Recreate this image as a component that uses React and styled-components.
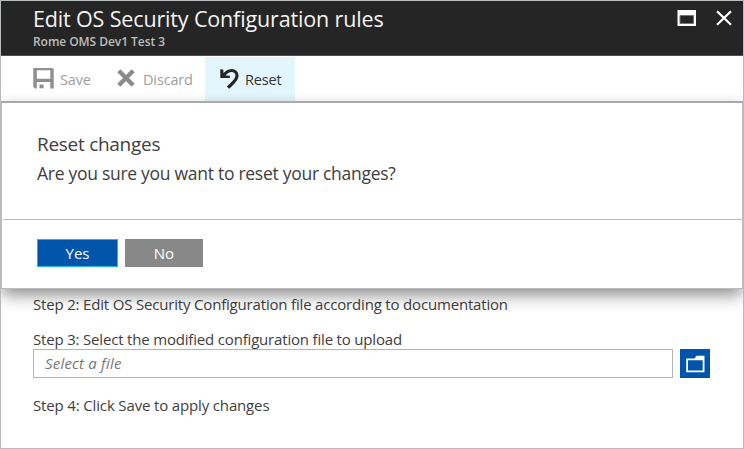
import React from "react";
import styled, { createGlobalStyle } from "styled-components";

const GlobalStyle = createGlobalStyle`
  * { box-sizing: border-box; }
  body { margin: 0; background: #fff; }
  button, input { font-family: inherit; }
`;

const Blade = styled.div`
  position: relative;
  display: flex;
  flex-direction: column;
  width: 744px;
  height: 449px;
  border: 1px solid #b9bcbc;
  background: #fff;
  color: #404040;
  font-family: "Open Sans", "Noto Sans", sans-serif;
  overflow: hidden;
`;

const Header = styled.header`
  display: flex;
  justify-content: space-between;
  height: 55px;
  padding: 4px 11px 0 32px;
  background: #252525;
  border-bottom: 1px solid #505050;
  flex: none;
`;

const Title = styled.h1`
  margin: 0;
  font-size: 21.5px;
  line-height: 28px;
  font-weight: 400;
  letter-spacing: -0.15px;
  color: #f4f4f4;
  white-space: nowrap;
`;

const Subtitle = styled.div`
  font-size: 12px;
  line-height: 18px;
  font-weight: 600;
  letter-spacing: -0.05px;
  color: #bdbdbd;
  white-space: nowrap;
`;

const WindowControls = styled.div`
  display: flex;
  align-items: flex-start;
  gap: 20px;
  padding-top: 5px;
  svg { display: block; }
`;

const Toolbar = styled.nav`
  display: flex;
  height: 45px;
  padding: 1px 0 0 20px;
  flex: none;
`;

const ToolButton = styled.button`
  display: flex;
  align-items: center;
  width: ${(p) => p.$width}px;
  padding: 0 0 0 ${(p) => p.$inset}px;
  gap: ${(p) => p.$gap}px;
  border: 0;
  background: ${(p) => (p.$active ? "#e3f6fd" : "transparent")};
  color: ${(p) => (p.$active ? "#333" : "#a0a0a0")};
  font-size: 14.5px;
  line-height: 20px;
  letter-spacing: -0.15px;
  white-space: nowrap;
  svg { display: block; flex: none; position: relative; top: -1px; }
`;

const ToolLabel = styled.span`
  padding-top: 1px;
`;

const Steps = styled.main`
  display: flex;
  flex-direction: column;
  padding: 193px 33px 0 32px;
`;

const Step = styled.div`
  height: ${(p) => p.$height}px;
  font-size: 15px;
  line-height: 20px;
  letter-spacing: ${(p) => p.$tracking}px;
  white-space: nowrap;
`;

const FileRow = styled.div`
  display: flex;
  gap: 7px;
  margin-bottom: 17px;
`;

const FileInput = styled.input`
  width: 640px;
  height: 29px;
  padding: 0 11px 1px;
  border: 1px solid #b4b4b4;
  background: #fff;
  font-size: 15px;
  font-style: italic;
  letter-spacing: 0.2px;
  &::placeholder { color: #777; opacity: 1; }
`;

const BrowseButton = styled.button`
  display: grid;
  place-items: center;
  width: 30px;
  height: 29px;
  padding: 0;
  border: 0;
  background: #0055ab;
`;

const Dialog = styled.section`
  position: absolute;
  top: 100px;
  left: 0;
  width: 742px;
  height: 188px;
  display: flex;
  flex-direction: column;
  background: #fff;
  border: 1px solid #bcbcbc;
  border-top: 2px solid #aaa;
  box-shadow: 0 7px 15px -1px rgba(0, 0, 0, 0.45);
`;

const DialogBody = styled.div`
  height: 116px;
  padding: 27px 0 0 35px;
`;

const DialogTitle = styled.h2`
  margin: 0;
  font-size: 19px;
  line-height: 28px;
  font-weight: 400;
  letter-spacing: -0.28px;
  white-space: nowrap;
`;

const Question = styled.p`
  margin: 0;
  font-size: 17.5px;
  line-height: 30px;
  letter-spacing: -0.28px;
  white-space: nowrap;
`;

const DialogActions = styled.div`
  display: flex;
  gap: 7px;
  margin-left: 1px;
  padding: 19px 0 0 34px;
  border-top: 1px solid #bbb;
`;

const ActionButton = styled.button`
  width: ${(p) => (p.$primary ? 81 : 78)}px;
  height: 28px;
  padding: 0;
  border: 1px solid ${(p) => (p.$primary ? "#1cb4ec" : "#888")};
  background: ${(p) => (p.$primary ? "#0055ab" : "#888")};
  color: #fff;
  font-size: 15px;
  line-height: 26px;
`;

const MaximizeIcon = () => (
  <svg width="19" height="16" viewBox="0 0 19 16">
    <path fill="#fff" fillRule="evenodd" d="M0.5 0H19V16H0.5ZM3 5.3V13.6H16.5V5.3Z" />
    <path fill="none" stroke="#777" d="M3 5.5H16.5V13.5H3Z" />
  </svg>
);

const CloseIcon = () => (
  <svg width="16" height="16" viewBox="0 0 16 16">
    <path d="M1 1.2L15 14.8M15 1.2L1 14.8" stroke="#fff" strokeWidth="2.2" />
  </svg>
);

const SaveIcon = () => (
  <svg width="21" height="21" viewBox="0 0 21 21">
    <path fill="#8f8f8f" fillRule="evenodd" d="M0.8 0H19.5L20.7 1.2V20.5H17.3V14H3.8V20.5H2L0.3 18.8V0.6ZM3.8 2.2V10.8H17.3V2.2Z" />
    <path fill="#8f8f8f" d="M6.5 16.5H10.5V20.3H6.5Z" />
  </svg>
);

const DiscardIcon = () => (
  <svg width="18" height="18" viewBox="0 0 18 18">
    <path d="M1.8 1.8L16.2 16.2M16.2 1.8L1.8 16.2" stroke="#8b8b8b" strokeWidth="4.4" />
  </svg>
);

const ResetIcon = () => (
  <svg width="19" height="21" viewBox="0 0 19 21" fill="none" stroke="#252525">
    <path d="M3 8C6 4 8.5 2.5 11.5 2.5C15 2.5 17 4.8 17 7.8C17 12.2 12.5 15.2 8 19.7" strokeWidth="3.2" />
    <path fill="#252525" stroke="none" d="M0.3 1L3.3 1.8L3.5 5.5L6 7.5L9.8 7.8V10H0.3Z" />
  </svg>
);

const FolderIcon = () => (
  <svg width="19" height="18" viewBox="0 0 19 18">
    <path fill="#fff" fillRule="evenodd" d="M0.2 3.5H8.5L10.5 0.7H18.5V17.2H0.2ZM2 5.3V15.4H16.7V5.3Z" />
  </svg>
);

export default function App() {
  return (
    <>
      <GlobalStyle />
      <Blade>
        <Header>
          <div>
            <Title>Edit OS Security Configuration rules</Title>
            <Subtitle>Rome OMS Dev1 Test 3</Subtitle>
          </div>
          <WindowControls>
            <MaximizeIcon />
            <CloseIcon />
          </WindowControls>
        </Header>
        <Toolbar>
          <ToolButton $width={84} $inset={12} $gap={6}>
            <SaveIcon /><ToolLabel>Save</ToolLabel>
          </ToolButton>
          <ToolButton $width={100} $inset={12} $gap={8}>
            <DiscardIcon /><ToolLabel>Discard</ToolLabel>
          </ToolButton>
          <ToolButton $active $width={90} $inset={15} $gap={6}>
            <ResetIcon /><ToolLabel>Reset</ToolLabel>
          </ToolButton>
        </Toolbar>
        <Steps>
          <Step $height={35} $tracking={-0.18}>Step 2: Edit OS Security Configuration file according to documentation</Step>
          <Step $height={20} $tracking={-0.18}>Step 3: Select the modified configuration file to upload</Step>
          <FileRow>
            <FileInput placeholder="Select a file" />
            <BrowseButton aria-label="Browse"><FolderIcon /></BrowseButton>
          </FileRow>
          <Step $height={20} $tracking={-0.15}>Step 4: Click Save to apply changes</Step>
        </Steps>
        <Dialog>
          <DialogBody>
            <DialogTitle>Reset changes</DialogTitle>
            <Question>Are you sure you want to reset your changes?</Question>
          </DialogBody>
          <DialogActions>
            <ActionButton $primary>Yes</ActionButton>
            <ActionButton>No</ActionButton>
          </DialogActions>
        </Dialog>
      </Blade>
    </>
  );
}
